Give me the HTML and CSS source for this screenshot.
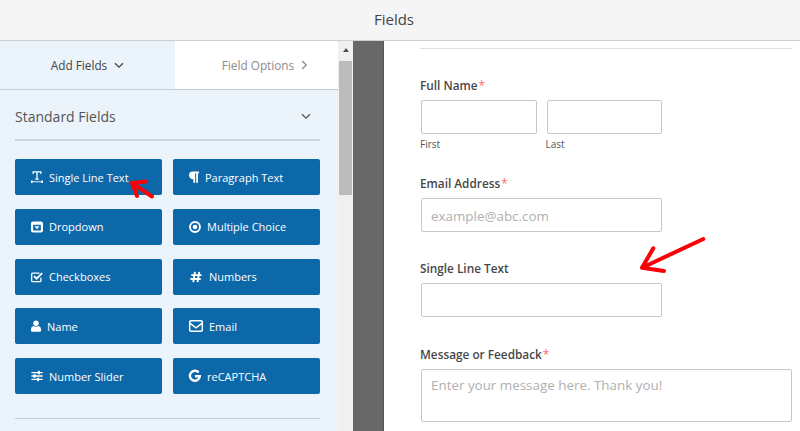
FILE: index.html
```html
<!DOCTYPE html>
<html lang="en">
<head>
  <meta charset="UTF-8"/>
  <title>Fields</title>
  <link rel="stylesheet" href="styles.css">
</head>
<body>
  <header class="toolbar">Fields</header>
  <div class="builder">
    <aside class="sidebar">
      <div class="tabs">
        <div class="tab active">Add Fields
          <svg class="chev" width="10" height="7" viewBox="0 0 10 7"><path d="M1 1.2l4 4 4-4"/></svg>
        </div>
        <div class="tab">Field Options
          <svg class="chev" width="7" height="10" viewBox="0 0 7 10"><path d="M1.2 1l4 4-4 4"/></svg>
        </div>
      </div>
      <div class="panel">
        <div class="panel-head">
          <span>Standard Fields</span>
          <svg class="chev" width="10" height="7" viewBox="0 0 10 7"><path d="M1 1.2l4 4 4-4"/></svg>
        </div>
        <div class="field-grid">
          <button class="btn">
            <svg class="ico" viewBox="0 0 14 14"><path class="line" d="M2.500 3.500V1h9v2.500M7 1v8.500M5 9.500h4"/><path class="line thin" d="M1.500 12.500h11"/><path d="M0 11h2v3H0zM12 11h2v3h-2z"/></svg>
            <span>Single Line Text</span>
          </button>
          <button class="btn">
            <svg class="ico narrow" viewBox="0 0 12 14"><path d="M0 5a4.500 4.500 0 0 1 4.500-4.500H12v2h-1.200V14H8.600V2.500H7.400V14H5.200V9.500A4.500 4.500 0 0 1 0 5z"/></svg>
            <span>Paragraph Text</span>
          </button>
          <button class="btn">
            <svg class="ico" viewBox="0 0 14 14"><path fill-rule="evenodd" d="M2.500.5h9A2.500 2.500 0 0 1 14 3v8a2.500 2.500 0 0 1-2.500 2.500h-9A2.500 2.500 0 0 1 0 11V3A2.500 2.500 0 0 1 2.500.5zM2.500 4.500v6.500h9V4.500zM4 6h6L7 9.500z"/></svg>
            <span>Dropdown</span>
          </button>
          <button class="btn">
            <svg class="ico" viewBox="0 0 14 14"><circle class="line thick" cx="7" cy="7" r="5.800"/><circle cx="7" cy="7" r="2.700"/></svg>
            <span>Multiple Choice</span>
          </button>
          <button class="btn">
            <svg class="ico" viewBox="0 0 14 14"><path class="line" d="M11.500 8v3.500a1 1 0 0 1-1 1H1.800a1 1 0 0 1-1-1V3.500a1 1 0 0 1 1-1h8"/><path class="line thick" d="M3.500 6l3 3 6.500-6.500"/></svg>
            <span>Checkboxes</span>
          </button>
          <button class="btn">
            <svg class="ico wide" viewBox="0 0 14 14"><path class="line thick" d="M5.800 1L3.800 13M10.800 1L8.800 13M1.500 4.800h12M.5 9.300h12"/></svg>
            <span>Numbers</span>
          </button>
          <button class="btn">
            <svg class="ico narrow" viewBox="0 0 12 14"><circle cx="6" cy="3.600" r="3.300"/><path d="M1.300 14A1.300 1.300 0 0 1 0 12.700v-2.200a3.500 3.500 0 0 1 3-3.400c1.900 1 4.100 1 6 0a3.500 3.500 0 0 1 3 3.400v2.200a1.300 1.300 0 0 1-1.300 1.300z"/></svg>
            <span>Name</span>
          </button>
          <button class="btn">
            <svg class="ico wide" viewBox="0 0 14 12"><rect class="line" x=".7" y=".7" width="12.600" height="10.600" rx="1.200"/><path class="line" d="M.8 3.200L7 7.800l6.200-4.600"/></svg>
            <span>Email</span>
          </button>
          <button class="btn">
            <svg class="ico" viewBox="0 0 14 14"><path class="line" d="M.5 3h13M.5 7h13M.5 11h13"/><rect x="8" y="1" width="2.500" height="4"/><rect x="3" y="5" width="2.500" height="4"/><rect x="7" y="9" width="2.500" height="4"/></svg>
            <span>Number Slider</span>
          </button>
          <button class="btn">
            <svg class="ico" viewBox="0 0 14 14"><path class="line heavy" d="M11.300 3A5.800 5.800 0 1 0 12.600 7.300H7"/></svg>
            <span>reCAPTCHA</span>
          </button>
        </div>
        <div class="panel-rule"></div>
      </div>
    </aside>
    <div class="scrollbar">
      <div class="scroll-up"></div>
      <div class="scroll-thumb"></div>
    </div>
    <div class="gutter"></div>
    <main class="canvas">
      <div class="form-rule"></div>
      <div class="form-field first">
        <label>Full Name<em>*</em></label>
        <div class="name-row">
          <div class="name-col">
            <div class="input"></div>
            <small>First</small>
          </div>
          <div class="name-col">
            <div class="input"></div>
            <small>Last</small>
          </div>
        </div>
      </div>
      <div class="form-field email">
        <label>Email Address<em>*</em></label>
        <div class="input medium">example@abc.com</div>
      </div>
      <div class="form-field single">
        <label>Single Line Text</label>
        <div class="input medium"></div>
      </div>
      <div class="form-field message">
        <label>Message or Feedback<em>*</em></label>
        <div class="input area">Enter your message here. Thank you!</div>
      </div>
    </main>
  </div>

  <svg class="arrow arrow-small" width="30" height="26" viewBox="0 0 30 26"><path d="M2 5L16 3.500M2 5L7 18M2 5L22 18.500"/></svg>
  <svg class="arrow arrow-big" width="70" height="40" viewBox="0 0 70 40"><path d="M2 30.700L63.300 2M2 30.700L13.300 11.300M2 30.700L24 34"/></svg>
</body>
</html>
```

FILE: styles.css
```css
* { box-sizing: border-box; }

html, body {
  margin: 0;
  height: 100%;
  overflow: hidden;
}

body {
  font-family: "Open Sans", sans-serif;
  color: #444;
  background: #fff;
  position: relative;
}

.toolbar {
  height: 41px;
  line-height: 38px;
  padding-right: 12px;
  text-align: center;
  font-size: 15px;
  color: #444;
  background: #f5f5f5;
  border-bottom: 1px solid #cfcfcf;
}

.builder {
  display: flex;
  height: 390px;
}

/* left panel */
.sidebar {
  width: 338px;
  flex: none;
  background: #ebf3fb;
}

.tabs {
  display: flex;
  height: 49px;
  border-bottom: 1px solid #c4cdd6;
}

.tab {
  display: flex;
  align-items: center;
  justify-content: center;
  gap: 7px;
  font-size: 11.800px;
  color: #8c8c8c;
  width: 163px;
  background: #fff;
  padding-left: 17px;
}

.tab.active {
  width: 175px;
  background: #ebf3fb;
  color: #444;
  padding-left: 0;
}

.chev {
  fill: none;
  stroke: currentColor;
  stroke-width: 1.300;
}

.panel {
  padding: 0 18px 0 15px;
}

.panel-head {
  display: flex;
  align-items: center;
  justify-content: space-between;
  height: 51px;
  padding: 3px 9px 0 0;
  font-size: 14px;
  color: #555;
  border-bottom: 2px solid #ccd4dc;
}

.field-grid {
  display: grid;
  grid-template-columns: 147px 147px;
  grid-auto-rows: 36px;
  column-gap: 11px;
  row-gap: 13.750px;
  margin-top: 18px;
}

.btn {
  display: flex;
  align-items: center;
  gap: 6px;
  padding: 0 0 0 16px;
  font: 500 11px "Open Sans", sans-serif;
  color: #fff;
  background: #0d68aa;
  border: none;
  border-radius: 2px;
}

.btn span { white-space: nowrap; }

.ico {
  width: 12px;
  height: 12px;
  flex: none;
  fill: #fff;
  overflow: visible;
}

.ico.narrow { width: 10px; }
.ico.wide { width: 14px; }

.ico .line {
  fill: none;
  stroke: #fff;
  stroke-width: 1.500;
}

.ico .thick { stroke-width: 2.200; }
.ico .thin { stroke-width: 1; }
.ico .heavy { stroke-width: 2.800; }

.panel-rule {
  margin-top: 24px;
  border-top: 1px solid #c4cdd6;
}

/* scrollbar and gutter */
.scrollbar {
  width: 15px;
  flex: none;
  background: #f0f0f0;
}

.scroll-up {
  width: 0;
  margin: 7px auto 0;
  border: 3.500px solid transparent;
  border-top: 0;
  border-bottom: 4px solid #505050;
}

.scroll-thumb {
  height: 134px;
  margin: 9px 0 0;
  background: #bcbcbc;
  border-left: 1px solid #f0f0f0;
  border-right: 1px solid #f0f0f0;
}

.gutter {
  width: 31px;
  flex: none;
  background: #686868;
  border-right: 1px solid #555;
}

/* form preview */
.canvas {
  flex: 1;
  padding: 7px 8px 0 36px;
  overflow: hidden;
}

.form-rule {
  border-top: 1px solid #dedede;
}

label {
  display: block;
  font-size: 11.800px;
  font-weight: 600;
  line-height: 16px;
  color: #484848;
}

label em {
  font-style: normal;
  font-weight: 400;
  color: #ff6b6b;
  margin-left: 1px;
}

.form-field.first { margin-top: 28px; }
.form-field.email { margin-top: 24px; }
.form-field.single { margin-top: 28px; }
.form-field.message { margin-top: 29px; }

.input {
  margin: 7px 0 0 1px;
  height: 34px;
  padding: 0 9px;
  line-height: 35px;
  font-size: 13.400px;
  color: #b0b0b0;
  background: #fff;
  border: 1px solid #c8c8c8;
  border-radius: 2px;
}

.name-row {
  display: flex;
  gap: 9px;
}

.name-col { width: 116.500px; }

.name-col small {
  display: block;
  font-size: 10px;
  line-height: 14px;
  margin-top: 3px;
  color: #555;
}

.input.medium { width: 241px; }

.input.area {
  height: 53px;
  line-height: 20px;
  padding-top: 5px;
}

/* annotation arrows over the picture */
.arrow {
  position: absolute;
  fill: none;
  stroke: #fb0007;
  stroke-linecap: round;
  stroke-width: 4;
}

.arrow-small {
  left: 130px;
  top: 178px;
}

.arrow-big {
  left: 640px;
  top: 237px;
}
```
